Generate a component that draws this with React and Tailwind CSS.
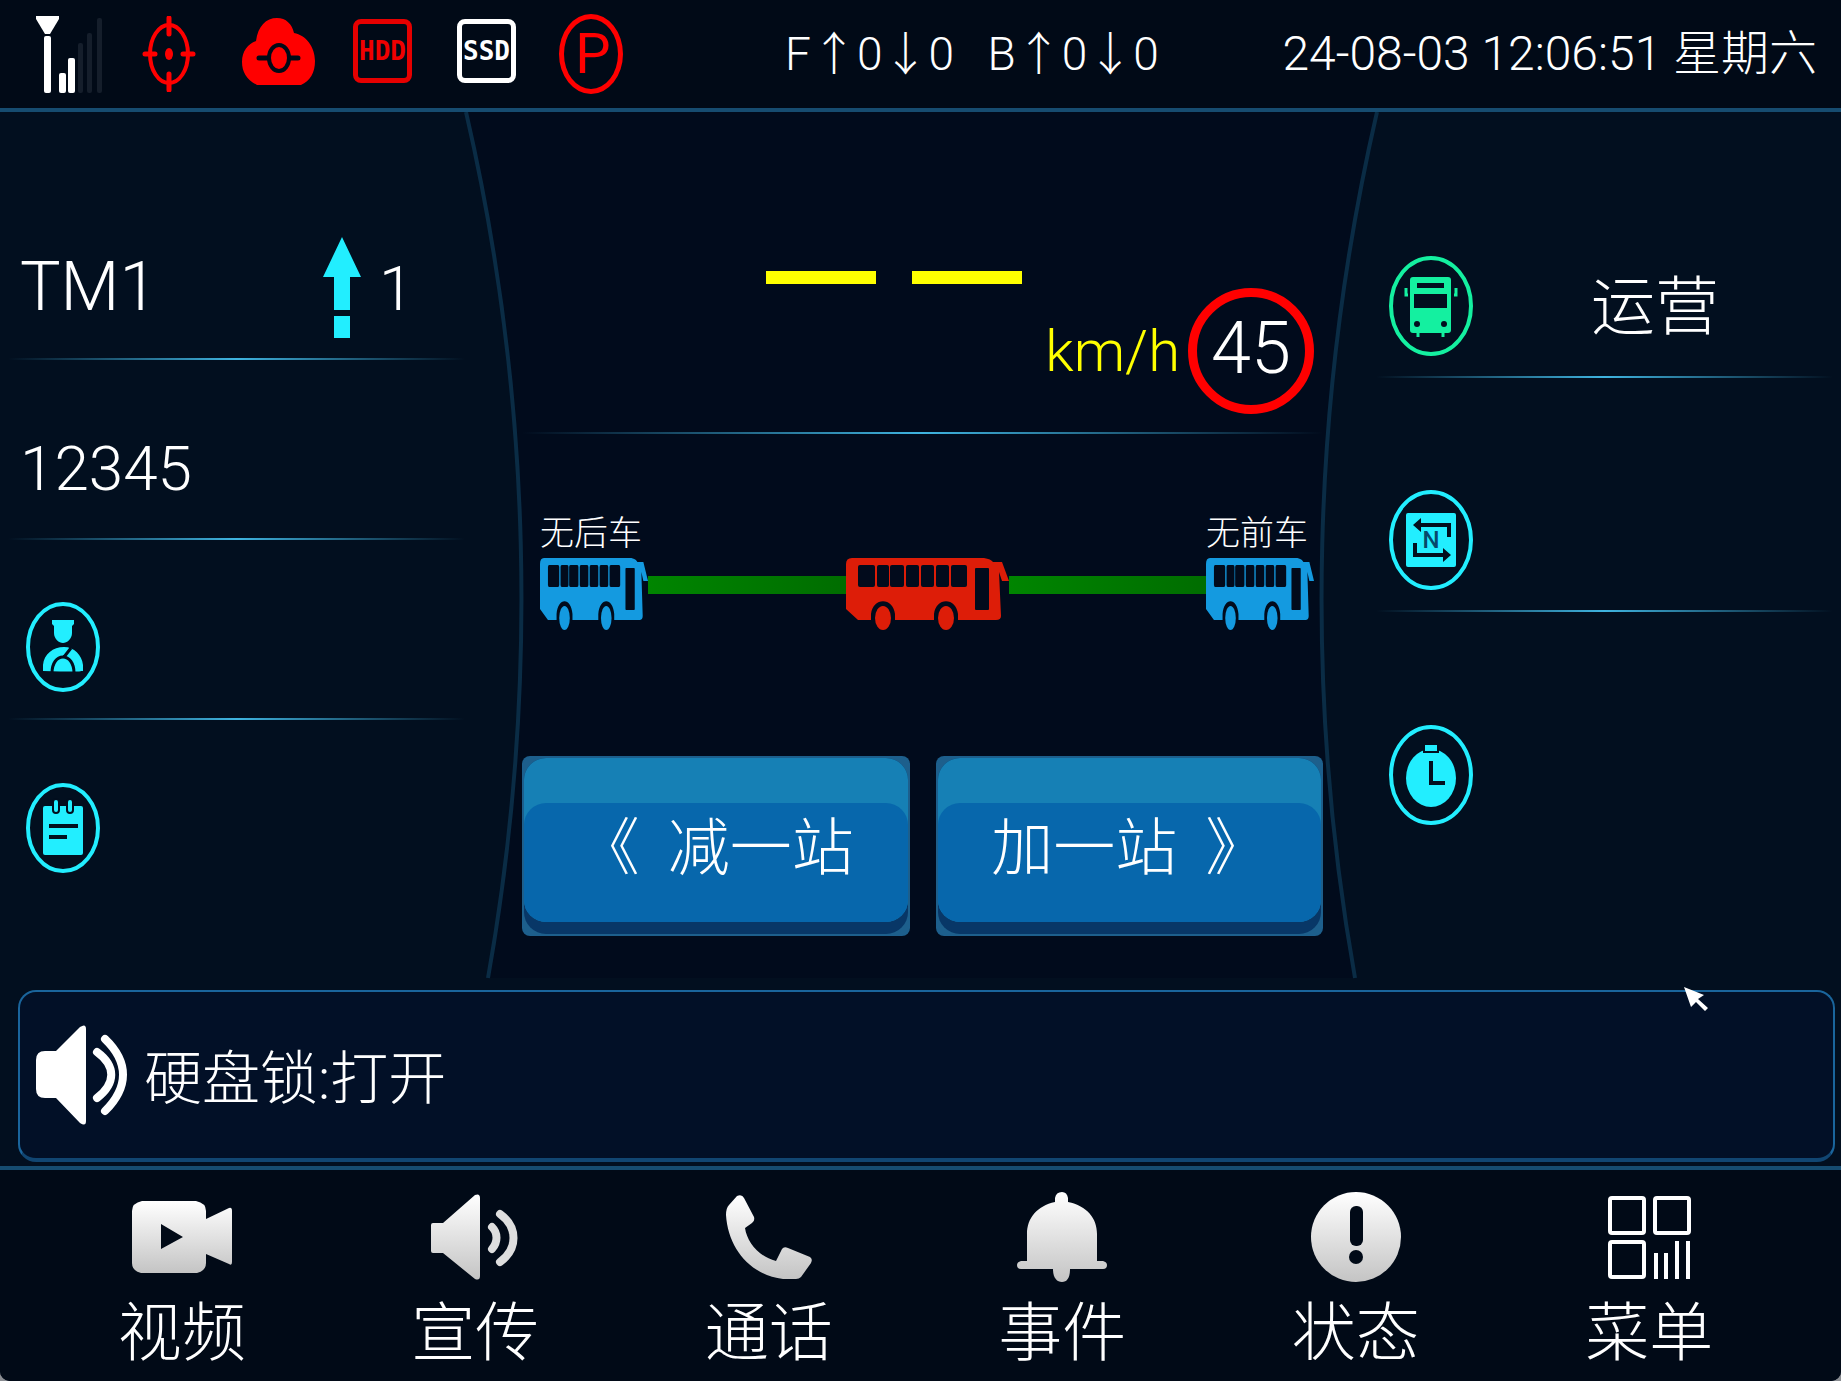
import React from "react";

const SPOT = "#22eeff";
const DARK = "#020e1e";

function SignalIcon() {
  return (
    <svg width="67" height="78" viewBox="0 0 67 78" aria-label="信号">
      <path d="M0 1H23V4L14 19H9L0 4Z" fill="#fff" />
      <rect x="8" y="21" width="7" height="57" rx="2" fill="#fff" />
      <rect x="23" y="58" width="7" height="20" rx="2" fill="#fff" />
      <rect x="32" y="43" width="7" height="35" rx="2" fill="#fff" />
      <rect x="42" y="28" width="5" height="50" rx="2" fill="#151e2b" />
      <rect x="51" y="18" width="5" height="60" rx="2" fill="#151e2b" />
      <rect x="61" y="3" width="5" height="75" rx="2" fill="#151e2b" />
    </svg>
  );
}

function TargetIcon() {
  return (
    <svg width="54" height="76" viewBox="0 0 54 76" fill="none" stroke="#f00" aria-label="定位">
      <ellipse cx="27" cy="38" rx="19" ry="29" strokeWidth="4" />
      <path d="M27 2V18M27 58V74M3 38H13M41 38H51" strokeWidth="5" strokeLinecap="round" />
      <ellipse cx="27" cy="38" rx="4" ry="6" fill="#f00" stroke="none" />
    </svg>
  );
}

function CloudIcon() {
  return (
    <svg width="73" height="67" viewBox="0 0 73 67" aria-label="云平台">
      <path
        d="M15 67C5 62 0 54 0 44C0 33 6 26 14 23C16 8 24 0 35 0C44 0 50 6 52 15C64 17 73 29 73 43C73 55 68 63 59 67Z"
        fill="#f00"
      />
      <path d="M17 40H26M48 40H56" stroke="#010a17" strokeWidth="5" strokeLinecap="round" />
      <ellipse cx="37" cy="40" rx="10" ry="13" fill="#f00" stroke="#010a17" strokeWidth="4" />
    </svg>
  );
}

function DiskBadge({ label, tone }) {
  return (
    <span
      className={
        "flex h-[64px] w-[59px] items-center justify-center rounded-lg border-[5px] font-[DejaVu_Sans_Mono,monospace] text-[26px] leading-none font-bold " +
        tone
      }
    >
      {label}
    </span>
  );
}

function ParkBadge() {
  return (
    <span className="flex h-[80px] w-[64px] items-center justify-center rounded-[50%] border-[5px] border-[#f00] pl-1 text-[56px] leading-none font-normal text-[#f00]">
      P
    </span>
  );
}

function DriverIcon() {
  return (
    <svg width="74" height="92" viewBox="0 0 74 92" aria-label="司机">
      <ellipse cx="37" cy="46" rx="35" ry="43" fill="none" stroke={SPOT} strokeWidth="4" />
      <path d="M26 19H48V23L46 25V32C46 38 41 42 37 42C33 42 28 38 28 32V25L26 23Z" fill={SPOT} />
      <path d="M17 70V64C18 53 27 46 38 46C48 46 56 54 57 64V70H55Q56 71 17 70Z" fill={SPOT} />
      <path d="M26 72C26 62 31 56 37 56C43 56 48 62 48 72M38 56L45 47" fill="none" stroke={DARK} strokeWidth="3" />
    </svg>
  );
}

function NoteIcon() {
  return (
    <svg width="74" height="92" viewBox="0 0 74 92" aria-label="任务">
      <ellipse cx="37" cy="46" rx="35" ry="43" fill="none" stroke={SPOT} strokeWidth="4" />
      <rect x="17" y="24" width="40" height="49" rx="2" fill={SPOT} />
      <path d="M30 20V28M44 20V28" stroke={DARK} strokeWidth="8" strokeLinecap="round" />
      <path d="M30 20V28M44 20V28" stroke={SPOT} strokeWidth="4" strokeLinecap="round" />
      <path d="M23 44H52M23 55H41" stroke={DARK} strokeWidth="4" />
    </svg>
  );
}

function ServiceIcon() {
  const green = "#14f0a0";
  return (
    <svg width="84" height="100" viewBox="0 0 84 100" aria-label="运营状态">
      <ellipse cx="42" cy="50" rx="40" ry="48" fill="none" stroke={green} strokeWidth="4" />
      <rect x="21" y="21" width="41" height="56" rx="3" fill={green} />
      <rect x="28" y="27" width="27" height="5" fill={DARK} />
      <rect x="25" y="38" width="33" height="14" fill={DARK} />
      <path d="M17 32V39H19M67 32V39H65M29 76V81M54 76V81" fill="none" stroke={green} strokeWidth="3" />
      <circle cx="28" cy="68" r="3" fill={DARK} />
      <circle cx="55" cy="68" r="3" fill={DARK} />
    </svg>
  );
}

function RouteIcon() {
  return (
    <svg width="84" height="100" viewBox="0 0 84 100" aria-label="线路">
      <ellipse cx="42" cy="50" rx="40" ry="48" fill="none" stroke={SPOT} strokeWidth="4" />
      <rect x="17" y="23" width="50" height="54" rx="2" fill={SPOT} />
      <path d="M30 35H60V47M26 53V65H56" fill="none" stroke={DARK} strokeWidth="4" />
      <path d="M24 35L32 28V42ZM62 65L54 58V72Z" fill={DARK} />
      <text x="42" y="58" textAnchor="middle" fontFamily="Roboto, sans-serif" fontSize="24" fontWeight="500" fill="#06486a">
        N
      </text>
    </svg>
  );
}

function ClockIcon() {
  return (
    <svg width="84" height="100" viewBox="0 0 84 100" aria-label="时间">
      <ellipse cx="42" cy="50" rx="40" ry="48" fill="none" stroke={SPOT} strokeWidth="4" />
      <ellipse cx="42" cy="53" rx="25" ry="29" fill={SPOT} />
      <rect x="34" y="19" width="16" height="9" fill={DARK} />
      <rect x="36" y="20" width="12" height="6" fill={SPOT} />
      <path d="M42 36V58H56" fill="none" stroke={DARK} strokeWidth="4" />
    </svg>
  );
}

function DirectionArrow() {
  return (
    <svg width="38" height="101" viewBox="0 0 38 101" fill={SPOT} aria-label="上行">
      <path d="M19 0L38 40H27V73H11V40H0Z" />
      <rect x="11" y="79" width="16" height="22" />
    </svg>
  );
}

const WINDOWS = [
  [12, 17],
  [31, 12],
  [44, 14],
  [60, 13],
  [75, 13],
  [90, 13],
  [105, 16],
];

function Bus({ className, color }) {
  return (
    <svg className={className} viewBox="0 0 163 72" preserveAspectRatio="none" aria-hidden="true">
      <path
        d="M6 0H138Q145 1 147 4H156L163 23H156L153 14L155 58Q155 62 150 62H12L0 51V6Q0 0 6 0Z"
        fill={color}
      />
      {WINDOWS.map(([x, width]) => (
        <rect key={x} x={x} y="7" width={width} height="22" rx="2" fill="#020b1c" />
      ))}
      <rect x="129" y="10" width="14" height="42" rx="1" fill="#020b1c" />
      <path d="M25 63V56C27 39 47 39 49 56V63ZM88 63V56C90 39 110 39 112 56V63Z" fill="#020b1c" />
      <ellipse cx="37" cy="60" rx="8" ry="12" fill={color} />
      <ellipse cx="100" cy="60" rx="8" ry="12" fill={color} />
    </svg>
  );
}

function Divider() {
  return <div className="h-[2px] bg-linear-to-r from-transparent via-[#3fb4e0] to-transparent" />;
}

function SideRow({ height, last, children }) {
  return (
    <div className={"flex flex-col " + height}>
      <div className="flex flex-1 items-center">{children}</div>
      {!last && <Divider />}
    </div>
  );
}

function StepButton({ children }) {
  return (
    <button type="button" className="h-[180px] flex-1 rounded-lg bg-[#1d5f8c] p-[2px]">
      <span className="block h-full rounded-[22px] bg-[#083767] pb-3">
        <span className="block h-full rounded-[22px] bg-[#1680b5] pt-[45px]">
          <span className="flex h-full items-center justify-center gap-7 rounded-[22px] bg-[#0767ac] pb-7 text-[62px] leading-none">
            {children}
          </span>
        </span>
      </span>
    </button>
  );
}

function VideoIcon() {
  return (
    <svg width="100" height="72" viewBox="0 0 100 72" aria-hidden="true">
      <path
        fillRule="evenodd"
        d="M10 0H64Q74 2 74 10V18L97 7Q100 6 100 10V61Q100 65 97 63L74 53V62Q74 70 65 72H9Q0 70 0 62V10Q0 2 10 0ZM29 23V48L51 36Z"
        fill="url(#metal)"
      />
    </svg>
  );
}

function HornIcon() {
  return (
    <svg width="88" height="86" viewBox="0 0 88 86" aria-hidden="true">
      <path d="M2 29H12L44 1Q49-1 49 4V82Q49 87 44 85L12 59H2Q0 59 0 57V31Q0 29 2 29Z" fill="url(#metal)" />
      <path d="M61 33C67 39 67 48 61 55M69 20C87 33 87 55 69 68" fill="none" stroke="#dedede" strokeWidth="8" strokeLinecap="round" />
    </svg>
  );
}

function PhoneIcon() {
  return (
    <svg width="86" height="84" viewBox="0 0 86 84" aria-hidden="true">
      <path
        d="M11 1Q16-1 18 3L28 22Q29 26 26 28L19 33C21 47 33 62 50 66L56 54Q58 51 62 53L84 62Q87 64 85 68L75 82Q73 84 70 84H57C24 80 2 53 0 20Q0 13 3 10Z"
        fill="url(#metal)"
      />
    </svg>
  );
}

function BellIcon() {
  return (
    <svg width="90" height="90" viewBox="0 0 90 90" aria-hidden="true">
      <path
        d="M38 10V6Q39 0 45 0Q50 0 51 6V10C70 14 80 26 80 42V69H86Q90 70 90 73Q90 77 86 77H53C53 86 50 90 45 90C40 90 36 86 36 77H4Q0 77 0 73Q0 70 4 69H10V42C10 26 20 14 38 10Z"
        fill="url(#metal)"
      />
    </svg>
  );
}

function StatusIcon() {
  return (
    <svg width="90" height="90" viewBox="0 0 90 90" aria-hidden="true">
      <circle cx="45" cy="45" r="45" fill="url(#metal)" />
      <rect x="39" y="14" width="13" height="40" rx="6" fill="#010a17" />
      <circle cx="45" cy="65" r="7" fill="#010a17" />
    </svg>
  );
}

function MenuIcon() {
  return (
    <svg width="83" height="83" viewBox="0 0 83 83" fill="none" stroke="#fff" strokeWidth="4" aria-hidden="true">
      <rect x="2" y="2" width="34" height="35" rx="2" />
      <rect x="47" y="2" width="34" height="35" rx="2" />
      <rect x="2" y="46" width="34" height="35" rx="2" />
      <path d="M48 57V83M58 57V83M69 45V83M80 45V83" />
    </svg>
  );
}

const NAV = [
  ["视频", VideoIcon],
  ["宣传", HornIcon],
  ["通话", PhoneIcon],
  ["事件", BellIcon],
  ["状态", StatusIcon],
  ["菜单", MenuIcon],
];

export default function App() {
  return (
    <div
      lang="zh-CN"
      className="bg-[#8a8d92] font-[Roboto,'Noto_Sans_CJK_SC',sans-serif] font-light text-white"
    >
      <svg width="0" height="0" className="absolute" aria-hidden="true">
        <defs>
          <linearGradient id="metal" x1="0" y1="0" x2="0" y2="1">
            <stop offset="0" stopColor="#ffffff" />
            <stop offset="1" stopColor="#c4c4c4" />
          </linearGradient>
        </defs>
      </svg>

      <div className="relative flex min-h-screen flex-col overflow-hidden rounded-b-[10px] bg-[#020f1f]">
        <header className="flex h-[112px] items-center border-b-4 border-[#164c70] bg-[#010a17] pr-6 pl-9">
          <div className="flex items-center pr-[162px]">
            <SignalIcon />
            <div className="flex items-center pr-[46px] pl-[39px]">
              <TargetIcon />
            </div>
            <div className="flex items-center gap-[38px] pr-[43px] pb-[6px]">
              <CloudIcon />
              <div className="flex gap-[45px]">
                <DiskBadge label="HDD" tone="border-[#e60000] text-[#f00000]" />
                <DiskBadge label="SSD" tone="border-white text-white" />
              </div>
            </div>
            <ParkBadge />
          </div>
          <p className="text-[46px] leading-none whitespace-pre">F↑0↓0   B↑0↓0</p>
          <time className="ml-auto text-[48px] leading-none whitespace-nowrap">24-08-03 12:06:51 星期六</time>
        </header>

        <main className="relative grid flex-1 grid-cols-[473fr_895fr_473fr]">
          <svg
            className="absolute inset-0 h-full w-full"
            viewBox="0 0 1841 868"
            preserveAspectRatio="none"
            aria-hidden="true"
          >
            <path
              d="M466 0A2165 2165 0 0 1 488 866H1355A2165 2165 0 0 1 1377 0Z"
              fill="#010b1c"
            />
            <path
              d="M466 0A2165 2165 0 0 1 488 866M1355 866A2165 2165 0 0 1 1377 0"
              fill="none"
              stroke="#0a2c45"
              strokeWidth="4"
            />
          </svg>

          <section className="relative px-2 pt-[68px]">
            <SideRow height="h-[180px]">
              <div className="flex w-full items-center pt-9 pl-3">
                <span className="w-[303px] text-[68px] leading-none">TM1</span>
                <DirectionArrow />
                <span className="pt-1 pl-[18px] text-[62px] leading-none">1</span>
              </div>
            </SideRow>
            <SideRow height="h-[180px]">
              <span className="pt-10 pl-3 text-[62px] leading-none">12345</span>
            </SideRow>
            <SideRow height="h-[180px]">
              <div className="pt-9 pl-[18px]">
                <DriverIcon />
              </div>
            </SideRow>
            <SideRow height="h-[180px]" last>
              <div className="pt-9 pl-[18px]">
                <NoteIcon />
              </div>
            </SideRow>
          </section>

          <section className="relative pr-[45px] pl-[49px]">
            <div className="flex h-[320px] flex-col justify-end pr-[9px] pb-[18px]">
              <div className="flex justify-center gap-9 pr-12" role="img" aria-label="车速 --">
                <span className="h-[13px] w-[110px] bg-[#ff0]" />
                <span className="h-[13px] w-[110px] bg-[#ff0]" />
              </div>
              <div className="mt-1 flex items-center justify-end gap-2">
                <span className="text-[58px] leading-none text-[#ff0]">km/h</span>
                <span className="flex size-[126px] items-center justify-center rounded-full border-[9px] border-[#f00] pb-1 text-[72px] leading-none">
                  45
                </span>
              </div>
            </div>
            <Divider />
            <div className="pt-[82px] pr-[9px] pl-[18px]">
              <div className="flex justify-between pb-2 text-[34px] leading-none">
                <span>无后车</span>
                <span className="pr-[6px]">无前车</span>
              </div>
              <div className="flex h-[72px]">
                <Bus className="h-full w-[108px]" color="#149ae0" />
                <div className="mt-[18px] h-[18px] flex-1 bg-linear-to-r from-[#008500] to-[#006d00]" />
                <Bus className="h-full w-[163px]" color="#dd1d08" />
                <div className="mt-[18px] h-[18px] flex-1 bg-linear-to-r from-[#008500] to-[#006d00]" />
                <Bus className="h-full w-[108px]" color="#149ae0" />
              </div>
            </div>
            <div className="mt-[126px] flex gap-[26px]">
              <StepButton>
                <span>《</span>
                <span>减一站</span>
              </StepButton>
              <StepButton>
                <span>加一站</span>
                <span>》</span>
              </StepButton>
            </div>
          </section>

          <section className="relative px-2 pt-8">
            <SideRow height="h-[234px]">
              <div className="flex w-full items-center pt-[92px] pl-[13px]">
                <ServiceIcon />
                <span className="flex-1 pt-1 pl-1 text-center text-[64px] leading-none">运营</span>
              </div>
            </SideRow>
            <SideRow height="h-[234px]">
              <div className="pt-[92px] pl-[13px]">
                <RouteIcon />
              </div>
            </SideRow>
            <SideRow height="h-[234px]" last>
              <div className="pt-[92px] pl-[13px]">
                <ClockIcon />
              </div>
            </SideRow>
          </section>
        </main>

        <div className="border-b-4 border-[#164c70] pt-[10px] pr-[6px] pb-1 pl-[18px]">
          <div
            role="status"
            className="relative flex h-[172px] items-center gap-[17px] rounded-[18px] border-2 border-b-4 border-[#1a659c] border-b-[#114672] bg-[#021027] pl-4"
          >
            <svg width="91" height="100" viewBox="0 0 91 100" aria-hidden="true">
              <path
                d="M9 26H20L44 2Q50-2 50 4V96Q50 102 44 98L20 73H9Q0 73 0 64V35Q0 26 9 26Z"
                fill="#fff"
              />
              <path
                d="M61 27C80 41 80 58 61 73M69 14C93 37 93 62 69 86"
                fill="none"
                stroke="#fff"
                strokeWidth="8"
                strokeLinecap="round"
              />
            </svg>
            <span className="pt-2 text-[58px] leading-none">硬盘锁:打开</span>
            <svg
              className="absolute -top-[6px] right-[124px]"
              width="25"
              height="25"
              viewBox="0 0 25 25"
              aria-hidden="true"
            >
              <path d="M0 1L20 9L14 13L24 22L21 25L12 16L7 21Z" fill="#fff" />
            </svg>
          </div>
        </div>

        <nav className="grid h-[211px] grid-cols-6 bg-[#010a17] pt-[22px] pr-[45px] pl-[35px]">
          {NAV.map(([label, Icon]) => (
            <button key={label} type="button" className="flex flex-col items-center">
              <span className="flex h-[90px] items-center">
                <Icon />
              </span>
              <span className="mt-5 text-[64px] leading-none">{label}</span>
            </button>
          ))}
        </nav>
      </div>
    </div>
  );
}
